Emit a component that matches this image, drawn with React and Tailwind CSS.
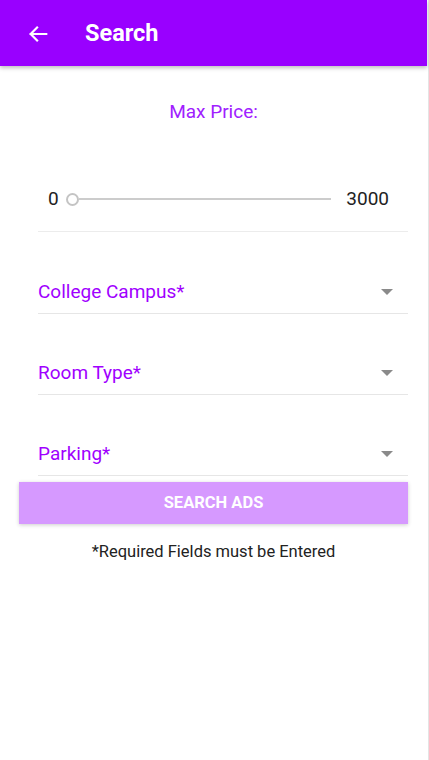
import React from "react";

const Caret = () => (
  <svg width="12" height="7" viewBox="0 0 12 7" className="shrink-0">
    <path d="M0 0h12L6 6z" fill="#8a8a8a" />
  </svg>
);

const SelectField = ({ label }) => (
  <div className="flex items-center justify-between h-[42px] border-b border-[#e6e6e6] pr-[15px]">
    <span className="text-[19px] text-[#a000ff]">{label}</span>
    <Caret />
  </div>
);

const App = () => {
  return (
    <div
      className="flex min-h-[760px] bg-white"
      style={{ fontFamily: "Roboto, 'Liberation Sans', sans-serif" }}
    >
      <div className="w-[427px] flex flex-col">
        {/* Header */}
        <header className="h-[66px] bg-[#9900ff] flex items-center shadow-[0_2px_4px_rgba(0,0,0,0.25)] z-10">
          <button className="ml-[27px] mt-[1px] text-white" aria-label="Back">
            <svg width="22" height="22" viewBox="0 0 24 24" fill="none" stroke="currentColor" strokeWidth="2.4" strokeLinecap="square">
              <path d="M21 12H4M11 5l-7 7 7 7" />
            </svg>
          </button>
          <h1 className="ml-[36px] mt-[2px] text-white text-[23.5px] font-bold leading-none">Search</h1>
        </header>

        {/* Max price */}
        <p className="mt-[34px] text-center text-[19px] text-[#a020ff] leading-[24px]">Max Price:</p>

        <div className="ml-[38px] mr-[19px] mt-[63px] border-b border-[#ececec] pb-[20px] flex items-center">
          <span className="ml-[10px] text-[19px] text-[#222] leading-[24px]">0</span>
          <div className="ml-[7px] flex-1 flex items-center">
            <span className="w-[13px] h-[13px] rounded-full border-2 border-[#c4c4c4] bg-white shrink-0" />
            <span className="flex-1 h-[2px] bg-[#cccccc]" />
          </div>
          <span className="ml-[15px] mr-[19px] text-[19px] text-[#222] leading-[24px]">3000</span>
        </div>

        <div className="ml-[38px] mr-[19px] mt-[40px] flex flex-col gap-[39px]">
          <SelectField label="College Campus*" />
          <SelectField label="Room Type*" />
          <SelectField label="Parking*" />
        </div>

        <button className="mx-[19px] mt-[6px] h-[42px] bg-[#d699ff] text-white text-[16.5px] font-bold shadow-[0_1px_4px_rgba(0,0,0,0.2)]">
          SEARCH ADS
        </button>

        <p className="mt-[16px] text-center text-[16.5px] text-[#222]">*Required Fields must be Entered</p>
      </div>
      <div className="w-px" />
      <div className="w-px bg-[#e4e4e4]" />
    </div>
  );
};

export default App;
